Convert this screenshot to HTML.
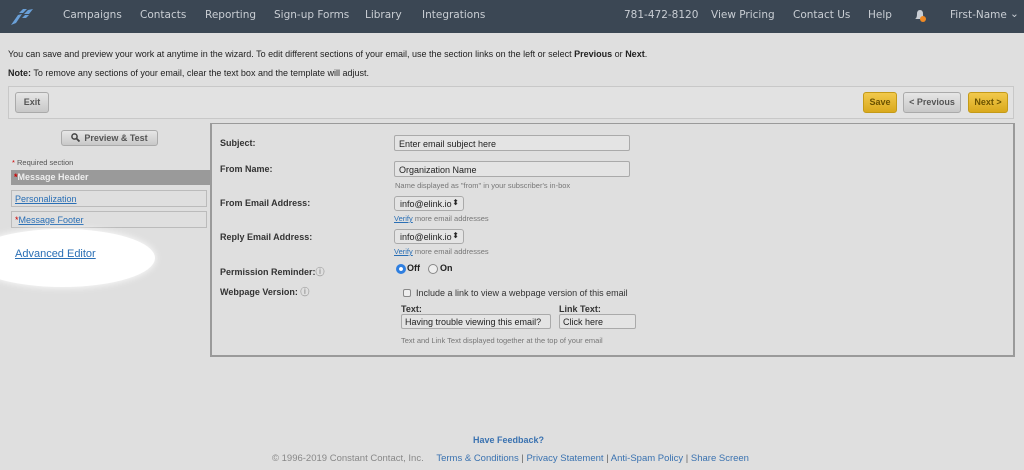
<!DOCTYPE html>
<html><head><style>
*{margin:0;padding:0;box-sizing:border-box}
body{width:1024px;height:470px;background:#dfdfdf;font-family:"Liberation Sans",sans-serif;position:relative;overflow:hidden;color:#222}
.a{position:absolute;white-space:nowrap}
.nav{position:absolute;left:0;top:0;width:1024px;height:33px;background:#3b4754}
.nav span{position:absolute;top:9px;color:#c9ced4;font-family:"DejaVu Sans",sans-serif;font-size:10.5px;font-weight:500}
.s9{font-size:9px}
.btn{position:absolute;border:1px solid #aaa;border-radius:3px;font-size:9px;font-weight:bold;text-align:center;color:#555;background:linear-gradient(#e6e6e6,#c8c8c8);white-space:nowrap}
.y{background:linear-gradient(#f2c94c,#d9a91d);border-color:#c49a18;color:#6b5200}
.lbl{position:absolute;left:220px;font-size:9px;font-weight:bold;color:#333;white-space:nowrap}
.inp{position:absolute;border:1px solid #aaa;border-radius:2px;background:#e4e4e4;font-size:9px;padding:3px 4px;color:#222;white-space:nowrap}
.hint{position:absolute;font-size:7.5px;color:#777;white-space:nowrap}
.lk{color:#2a6fb5;text-decoration:underline}
.sec{position:absolute;left:11px;width:196px;height:17px;border:1px solid #bbb;font-size:9px;padding:3px;}
.arr{position:absolute;right:4px;top:1px;font-size:8px}
</style></head><body>
<div class="nav">
<svg class="a" style="left:10px;top:6px" width="26" height="20" viewBox="0 0 26 20"><path d="M1 19 L8 9 L12 8 L6 17Z M9 7 L13 3 L17 3 L13 7Z M14 8 L18 4 L23 3 L19 8Z M12 12 L15 9 L19 9 L16 12Z" fill="#6aa0d8"/></svg>
<span style="left:63px">Campaigns</span><span style="left:140px">Contacts</span><span style="left:205px">Reporting</span><span style="left:274px">Sign-up Forms</span><span style="left:365px">Library</span><span style="left:422px">Integrations</span>
<span style="left:624px">781-472-8120</span><span style="left:711px">View Pricing</span><span style="left:793px">Contact Us</span><span style="left:868px">Help</span>
<svg class="a" style="left:913px;top:9px" width="14" height="14"><path d="M2 10 Q4 9 4 5 Q4 1 7 1 Q10 1 10 5 Q10 9 12 10Z" fill="#c9ced4"/><circle cx="10" cy="10" r="3" fill="#f08a24"/></svg>
<span style="left:950px">First-Name</span><span style="left:1010px;top:8px">⌄</span>
</div>
<div class="a s9" style="left:8px;top:49px">You can save and preview your work at anytime in the wizard. To edit different sections of your email, use the section links on the left or select <b>Previous</b> or <b>Next</b>.</div>
<div class="a" style="left:8px;top:68px;font-size:9px"><b>Note:</b> To remove any sections of your email, clear the text box and the template will adjust.</div>
<div class="a" style="left:8px;top:86px;width:1006px;height:33px;border:1px solid #c8c8c8;background:#e2e2e2"></div>
<div class="btn" style="left:15px;top:92px;width:34px;height:21px;line-height:19px">Exit</div>
<div class="btn y" style="left:863px;top:92px;width:34px;height:21px;line-height:19px">Save</div>
<div class="btn" style="left:903px;top:92px;width:58px;height:21px;line-height:19px">&lt; Previous</div>
<div class="btn y" style="left:968px;top:92px;width:40px;height:21px;line-height:19px">Next &gt;</div>
<div class="btn" style="left:61px;top:130px;width:97px;height:16px;line-height:14px"><svg width="9" height="9" style="vertical-align:-1px;margin-right:4px"><circle cx="3.5" cy="3.5" r="2.6" fill="none" stroke="#444" stroke-width="1.5"/><path d="M5.5 5.5L8.5 8.5" stroke="#444" stroke-width="1.8"/></svg>Preview &amp; Test</div>
<div class="a" style="left:12px;top:158px;font-size:7.5px;color:#555"><span style="color:#c00">*</span> Required section</div>
<div class="a" style="left:11px;top:170px;width:199px;height:15px;background:#9a9a9a;color:#eee;font-size:9px;font-weight:bold;padding:2px 3px"><span style="color:#c00">*</span>Message Header</div>
<div class="sec" style="top:190px"><span class="lk">Personalization</span></div>
<div class="sec" style="top:211px"><span style="color:#c00">*</span><span class="lk">Message Footer</span></div>
<div class="a" style="left:-30px;top:229px;width:185px;height:58px;border-radius:50%;background:#fff;box-shadow:0 0 8px #fff"></div>
<div class="a lk" style="left:15px;top:248px;font-size:11px">Advanced Editor</div>
<div class="a" style="left:210px;top:123px;width:805px;height:234px;border:2px solid #9a9a9a;border-top:1px solid #9a9a9a"></div>
<div class="lbl" style="top:138px">Subject:</div>
<div class="lbl" style="top:164px">From Name:</div>
<div class="lbl" style="top:198px">From Email Address:</div>
<div class="lbl" style="top:232px">Reply Email Address:</div>
<div class="lbl" style="top:265px">Permission Reminder:<span style="color:#999">ⓘ</span></div>
<div class="lbl" style="top:285px">Webpage Version: <span style="color:#999">ⓘ</span></div>
<div class="inp" style="left:394px;top:135px;width:236px;height:16px">Enter email subject here</div>
<div class="inp" style="left:394px;top:161px;width:236px;height:16px">Organization Name</div>
<div class="hint" style="left:395px;top:181px">Name displayed as "from" in your subscriber's in-box</div>
<div class="inp" style="left:394px;top:196px;width:70px;height:15px;padding:2px 5px;border-radius:3px">info@elink.io<span class="arr">⬍</span></div>
<div class="hint" style="left:394px;top:214px"><span class="lk">Verify</span> more email addresses</div>
<div class="inp" style="left:394px;top:229px;width:70px;height:15px;padding:2px 5px;border-radius:3px">info@elink.io<span class="arr">⬍</span></div>
<div class="hint" style="left:394px;top:247px"><span class="lk">Verify</span> more email addresses</div>
<div class="a" style="left:396px;top:264px;width:10px;height:10px;border-radius:50%;background:#2f7fe0;border:3px solid #2f7fe0;box-shadow:inset 0 0 0 2px #fff"></div>
<div class="a" style="left:407px;top:263px;font-size:9px;font-weight:bold">Off</div>
<div class="a" style="left:428px;top:264px;width:10px;height:10px;border-radius:50%;border:1px solid #888;background:#eee"></div>
<div class="a" style="left:440px;top:263px;font-size:9px;font-weight:bold">On</div>
<div class="a" style="left:403px;top:289px;width:8px;height:8px;border:1px solid #888;border-radius:2px;background:#eee"></div>
<div class="a" style="left:416px;top:288px;font-size:9px;color:#333">Include a link to view a webpage version of this email</div>
<div class="lbl" style="left:401px;top:304px">Text:</div>
<div class="lbl" style="left:559px;top:304px">Link Text:</div>
<div class="inp" style="left:401px;top:314px;width:150px;height:15px;padding:2px 3px">Having trouble viewing this email?</div>
<div class="inp" style="left:559px;top:314px;width:77px;height:15px;padding:2px 3px">Click here</div>
<div class="hint" style="left:401px;top:336px">Text and Link Text displayed together at the top of your email</div>
<div class="a" style="left:473px;top:435px;font-size:9px;font-weight:bold;color:#3a72b0">Have Feedback?</div>
<div class="a" style="left:272px;top:453px;font-size:9.5px;color:#888">© 1996-2019 Constant Contact, Inc. <span style="color:#3a72b0;margin-left:10px">Terms &amp; Conditions <span style="color:#666">|</span> Privacy Statement <span style="color:#666">|</span> Anti-Spam Policy <span style="color:#666">|</span> Share Screen</span></div>
</body></html>
